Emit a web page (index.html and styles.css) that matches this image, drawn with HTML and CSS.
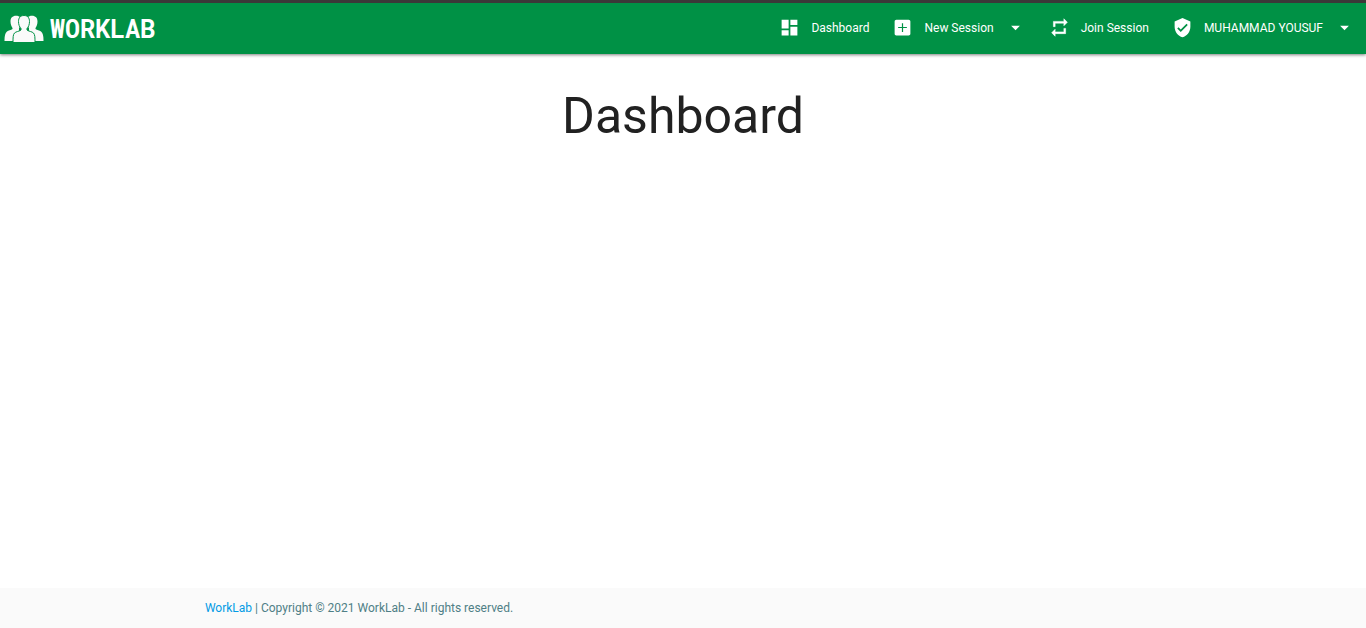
FILE: index.html
```html
<!DOCTYPE html>
<html lang="en">
<head>
<meta charset="utf-8">
<meta name="viewport" content="width=device-width, initial-scale=1">
<title>WorkLab</title>
<link rel="stylesheet" href="styles.css">
</head>
<body>
<header class="navbar">
  <a class="brand" href="#">
    <svg class="brand-logo" viewBox="0 0 40 28" aria-hidden="true">
      <g class="brand-side">
        <path d="M12 .8c4 0 5.500 2.200 5.500 5.700 0 3-1 5-2.500 6.500v3l2 2v8H.5c0-5 .5-8 2.500-9.500 1.500-1.200 4-1.300 5.500-2.500V13C7.500 11.500 6.500 9.500 6.500 6.500 6.500 3 8.500.8 12 .8z"/>
        <path d="M28 .8c-4 0-5.500 2.200-5.500 5.700 0 3 1 5 2.500 6.500v3l-2 2v8h16.500c0-5-.5-8-2.500-9.500-1.500-1.200-4-1.300-5.500-2.500V13c1-1.500 2-3.500 2-6.500C33.500 3 31.500.8 28 .8z"/>
      </g>
      <path class="brand-front" d="M20 .5c3.800 0 5.500 2.500 5.500 6 0 3-1 5.500-2.500 7v1.500c2 1.500 5 1.500 6.500 3 1.500 1.700 1.500 4.500 1.500 9.500H9c0-5 0-7.800 1.500-9.500 1.500-1.500 4.500-1.500 6.500-3v-1.500c-1.500-1.500-2.500-4-2.500-7 0-3.500 1.700-6 5.500-6z"/>
    </svg>
    <span>WORKLAB</span>
  </a>
  <nav class="menu">
    <a class="menu-item" href="#">
      <svg class="icon" viewBox="0 0 24 24" aria-hidden="true"><path d="M3 13h8V3H3v10zm0 8h8v-6H3v6zm10 0h8V11h-8v10zm0-18v6h8V3h-8z"/></svg>
      <span>Dashboard</span>
    </a>
    <button class="menu-item" type="button">
      <svg class="icon" viewBox="0 0 24 24" aria-hidden="true"><path d="M19 3H5c-1.110 0-2 .9-2 2v14c0 1.100.89 2 2 2h14c1.100 0 2-.9 2-2V5c0-1.100-.9-2-2-2zm-2 9.700h-4.300V17h-1.400v-4.300H7v-1.400h4.300V7h1.400v4.300H17v1.400z"/></svg>
      <span>New Session</span>
      <svg class="caret" viewBox="0 0 24 24" aria-hidden="true"><path d="M7 10l5 5 5-5z"/></svg>
    </button>
    <a class="menu-item" href="#">
      <svg class="icon icon-bold" viewBox="0 0 24 24" aria-hidden="true"><path d="M7 7h10v3l4-4-4-4v3H5v6h2V7zm10 10H7v-3l-4 4 4 4v-3h12v-6h-2v4z"/></svg>
      <span>Join Session</span>
    </a>
    <button class="menu-item" type="button">
      <svg class="icon" viewBox="0 0 24 24" aria-hidden="true"><path d="M12 1L3 5v6c0 5.550 3.840 10.740 9 12 5.160-1.260 9-6.450 9-12V5l-9-4zm-2 16l-4-4 1.410-1.410L10 14.170l6.590-6.590L18 9l-8 8z"/></svg>
      <span>MUHAMMAD YOUSUF</span>
      <svg class="caret" viewBox="0 0 24 24" aria-hidden="true"><path d="M7 10l5 5 5-5z"/></svg>
    </button>
  </nav>
</header>
<main class="content">
  <h1 class="title">Dashboard</h1>
</main>
<footer class="footer">
  <p class="copyright"><a class="footer-link" href="#">WorkLab</a> | Copyright © 2021 WorkLab - All rights reserved.</p>
</footer>
</body>
</html>
```

FILE: styles.css
```css
* {
  box-sizing: border-box;
}

body {
  margin: 0;
  min-height: 100vh;
  display: flex;
  flex-direction: column;
  background: #fff;
  color: #212121;
  font-family: Roboto, "Liberation Sans", sans-serif;
}

.navbar {
  display: flex;
  align-items: center;
  justify-content: space-between;
  height: 54px;
  padding: 0 11px 2px 4px;
  border-top: 3px solid #3b3838;
  background: #009145;
  box-shadow: 0 1px 3px rgba(0, 0, 0, 0.5);
}

.brand {
  display: flex;
  align-items: center;
  gap: 6px;
  padding-top: 2px;
  color: #fff;
  font: bold 25px/32px "Roboto Mono", "DejaVu Sans Mono", monospace;
  text-decoration: none;
}

.brand-logo {
  width: 40px;
  height: 28px;
}

.brand-side {
  fill: #fafafa;
}

.brand-front {
  fill: #fafafa;
  stroke: #009145;
  stroke-width: 1;
}

.menu {
  display: flex;
  align-items: center;
  gap: 23px;
}

.menu-item {
  display: flex;
  align-items: center;
  gap: 11px;
  padding: 0;
  border: 0;
  background: none;
  color: #fff;
  font: 400 12px/20px Roboto, "Liberation Sans", sans-serif;
  text-decoration: none;
}

.icon {
  width: 21px;
  height: 21px;
  fill: currentColor;
}

.icon-bold {
  stroke: currentColor;
  stroke-width: 0.6;
}

.caret {
  width: 21px;
  height: 21px;
  fill: currentColor;
}

.content {
  flex: 1;
  padding: 33px 16px;
}

.title {
  margin: 0;
  font-size: 50px;
  line-height: 58px;
  font-weight: 400;
  text-align: center;
}

.footer {
  padding: 10px 15%;
  background: #fafafa;
}

.copyright {
  margin: 0;
  color: #4f7f86;
  font-size: 12px;
  line-height: 20px;
}

.footer-link {
  color: #039be5;
  text-decoration: none;
}
```
